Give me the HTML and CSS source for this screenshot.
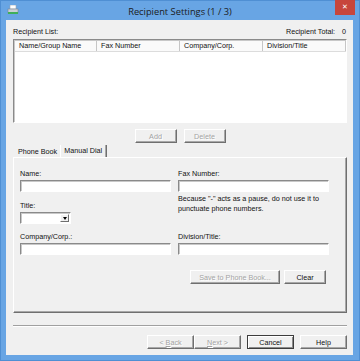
FILE: index.html
```html
<!DOCTYPE html>
<html lang="en">
<head>
  <meta charset="UTF-8" />
  <title>Recipient Settings</title>
  <link rel="stylesheet" href="styles.css">
</head>
<body>
  <div class="window">
    <div class="titlebar">
      <div class="app-icon">
        <svg width="12" height="10" viewBox="0 0 12 10">
          <rect x="3" y="0" width="6" height="4" fill="#ffffff" stroke="#9aa4ae" stroke-width="0.6"/>
          <rect x="1" y="4" width="10" height="4" fill="#c9cfd6" stroke="#7f8892" stroke-width="0.6"/>
          <rect x="1" y="7" width="10" height="2" fill="#3fae5a"/>
        </svg>
      </div>
      <div class="title">Recipient Settings (1 / 3)</div>
      <div class="close">&#x2715;</div>
    </div>

    <div class="client">
      <div class="list-head">
        <span>Recipient List:</span>
        <span>Recipient Total:<span class="total">0</span></span>
      </div>

      <div class="listbox">
        <div class="cols">
          <div class="col">Name/Group Name</div>
          <div class="col">Fax Number</div>
          <div class="col">Company/Corp.</div>
          <div class="col">Division/Title</div>
        </div>
      </div>

      <div class="list-buttons">
        <button class="btn" disabled>Add</button>
        <button class="btn" disabled>Delete</button>
      </div>

      <div class="tabs">
        <div class="tab">Phone Book</div>
        <div class="tab active">Manual Dial</div>
      </div>

      <div class="panel">
        <div class="fields">
          <div class="field">
            <label>Name:</label>
            <input type="text" class="edit">
          </div>
          <div class="field">
            <label>Fax Number:</label>
            <input type="text" class="edit">
          </div>

          <div class="field title-field">
            <label>Title:</label>
            <div class="combo">
              <span class="combo-arrow"></span>
            </div>
          </div>
          <p class="note">Because "-" acts as a pause, do not use it to punctuate phone numbers.</p>

          <div class="field low">
            <label>Company/Corp.:</label>
            <input type="text" class="edit">
          </div>
          <div class="field low">
            <label>Division/Title:</label>
            <input type="text" class="edit">
          </div>
        </div>

        <div class="panel-buttons">
          <button class="btn wide" disabled>Save to Phone Book...</button>
          <button class="btn">Clear</button>
        </div>
      </div>

      <div class="separator"></div>

      <div class="footer">
        <div class="pair">
          <button class="btn" disabled>&lt; <u>B</u>ack</button>
          <button class="btn" disabled><u>N</u>ext &gt;</button>
        </div>
        <button class="btn default">Cancel</button>
        <button class="btn">Help</button>
      </div>
    </div>
  </div>
</body>
</html>
```

FILE: styles.css
```css
body {
  margin: 0;
  font-family: "Liberation Sans", Arial, sans-serif;
  font-size: 7.2px;
  color: #111;
}

.window {
  width: 360px;
  height: 361px;
  background: #68a5e4;
  box-sizing: border-box;
  border: 1px solid #4f8fd3;
  display: flex;
  flex-direction: column;
}

.titlebar {
  height: 19px;
  display: grid;
  grid-template-columns: 1fr auto 1fr;
  align-items: start;
}

.app-icon {
  padding: 4px 0 0 6px;
}

.title {
  font-family: "Open Sans", "Liberation Sans", sans-serif;
  font-size: 9.3px;
  line-height: 22px;
  color: #1b1b1b;
}

.close {
  justify-self: end;
  width: 20px;
  height: 15px;
  margin-right: 4px;
  margin-top: -1px;
  background: #c7463c;
  color: #fff;
  font-family: "DejaVu Sans", sans-serif;
  font-size: 7px;
  line-height: 15px;
  text-align: center;
}

.client {
  flex: 1;
  margin: 0 6px 5px 5px;
  background: #f0f0f0;
  padding: 7px 6px 0 7px;
  display: flex;
  flex-direction: column;
}

.list-head {
  display: flex;
  justify-content: space-between;
  line-height: 9px;
  padding-right: 1px;
}

.total {
  margin-left: 7px;
}

.listbox {
  margin-top: 3px;
  height: 84px;
  background: #fff;
  border: 1px solid;
  border-color: #8a8a8a #fff #fff #8a8a8a;
  box-shadow: inset 1px 1px 0 #c8c8c8;
  box-sizing: border-box;
  padding: 1px 0 0 1px;
}

.cols {
  display: grid;
  grid-template-columns: 82px 83px 83px 83px;
  height: 10px;
  background: #fafafa;
  border-bottom: 1px solid #dcdcdc;
}

.col {
  padding-left: 4px;
  line-height: 10px;
  border-right: 1px solid #c6c6c6;
}

.list-buttons {
  display: flex;
  justify-content: center;
  gap: 7px;
  margin-top: 6px;
}

.btn {
  font: inherit;
  color: #111;
  width: 42px;
  height: 14px;
  padding: 0;
  background: #f0f0f0;
  border: 1px solid;
  border-color: #fff #6f6f6f #6f6f6f #fff;
  box-shadow: inset -1px -1px 0 #a8a8a8;
}

.btn:disabled {
  color: #a3a3a3;
  text-shadow: 1px 1px 0 #fff;
}

.btn.wide {
  width: 90px;
}

.btn.default {
  border-color: #3c3c3c;
  box-shadow: inset 1px 1px 0 #fff, inset -1px -1px 0 #8a8a8a;
}

.tabs {
  display: flex;
  align-items: flex-end;
  height: 12px;
  margin-top: 2px;
  padding-left: 1px;
}

.tab {
  height: 10px;
  line-height: 10px;
  padding: 0 3px 0 4px;
}

.tab.active {
  height: 12px;
  line-height: 11px;
  padding: 0 4px 0 3px;
  border-left: 1px solid #fff;
  border-right: 1px solid #6f6f6f;
  box-shadow: inset -1px 0 0 #a8a8a8;
}

.panel {
  height: 156px;
  box-sizing: border-box;
  border: 1px solid;
  border-color: #fff #6f6f6f #6f6f6f #fff;
  box-shadow: inset -1px -1px 0 #a8a8a8;
  padding: 11px 0 0 6px;
  display: flex;
  flex-direction: column;
}

.fields {
  display: grid;
  grid-template-columns: 151px 151px;
  column-gap: 7px;
  align-items: start;
}

.field {
  display: flex;
  flex-direction: column;
}

.field label {
  line-height: 9px;
  margin-bottom: 2px;
}

.edit {
  height: 12px;
  box-sizing: border-box;
  margin: 0;
  padding: 0;
  background: #fff;
  border: 1px solid;
  border-color: #8a8a8a #fff #fff #8a8a8a;
  box-shadow: inset 1px 1px 0 #c8c8c8;
}

.title-field {
  margin-top: 9px;
}

.combo {
  width: 51px;
  height: 12px;
  box-sizing: border-box;
  background: #fff;
  border: 1px solid;
  border-color: #8a8a8a #fff #fff #8a8a8a;
  box-shadow: inset 1px 1px 0 #c8c8c8;
  display: flex;
  justify-content: flex-end;
  padding: 1px 1px 1px 0;
}

.combo-arrow {
  width: 9px;
  background: #f0f0f0;
  border: 1px solid;
  border-color: #fff #6f6f6f #6f6f6f #fff;
  box-sizing: border-box;
  display: flex;
  align-items: center;
  justify-content: center;
}

.combo-arrow::after {
  content: "";
  border-left: 2.5px solid transparent;
  border-right: 2.5px solid transparent;
  border-top: 3px solid #000;
}

.note {
  margin: 2px 0 0;
  line-height: 10px;
  width: 150px;
}

.low {
  margin-top: 8px;
}

.panel-buttons {
  display: flex;
  justify-content: flex-end;
  gap: 4px;
  margin-top: 15px;
  padding-right: 20px;
}

.separator {
  margin-top: 12px;
  border-top: 1px solid #a0a0a0;
  border-bottom: 1px solid #fff;
}

.footer {
  display: flex;
  justify-content: flex-end;
  gap: 6px;
  margin-top: 8px;
}

.footer .btn {
  width: 47px;
}

.pair {
  display: flex;
}
```
